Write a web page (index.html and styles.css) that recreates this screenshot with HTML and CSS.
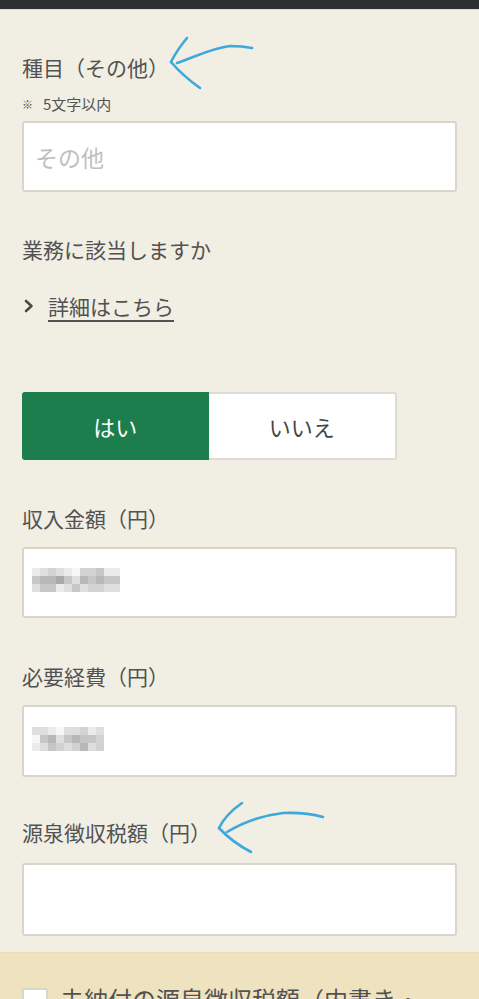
FILE: index.html
```html
<!DOCTYPE html>
<html lang="ja">
<head>
<meta charset="utf-8">
<title>収入入力</title>
<link rel="stylesheet" href="styles.css">
</head>
<body>
<div class="page">
  <div class="topbar"></div>
  <main class="form">
    <div class="label first">種目（その他）</div>
    <div class="note"><span class="kome">※</span>5文字以内</div>
    <div class="input in1"><span class="placeholder">その他</span></div>

    <div class="label q">業務に該当しますか</div>
    <a class="detail" href="#">
      <svg class="chev" width="10" height="14" viewBox="0 0 10 14"><path d="M2 2 L7.5 7 L2 12" fill="none" stroke="#4a4a4a" stroke-width="2.6" stroke-linecap="round" stroke-linejoin="round"/></svg>
      <span class="detail-text">詳細はこちら</span>
    </a>

    <div class="toggle">
      <button class="opt on">はい</button>
      <button class="opt">いいえ</button>
    </div>

    <div class="label l3">収入金額（円）</div>
    <div class="input in2">
      <div class="mosaic cols11">
        <i class="c1"></i><i class="c2"></i><i class="c3"></i><i class="c2"></i><i class="c1"></i><i class="c0"></i><i class="c3"></i><i class="c3"></i><i class="c4"></i><i class="c1"></i><i class="c1"></i>
        <i class="c4"></i><i class="c5"></i><i class="c5"></i><i class="c6"></i><i class="c4"></i><i class="c2"></i><i class="c5"></i><i class="c4"></i><i class="c5"></i><i class="c4"></i><i class="c4"></i>
        <i class="c2"></i><i class="c4"></i><i class="c4"></i><i class="c1"></i><i class="c2"></i><i class="c4"></i><i class="c2"></i><i class="c3"></i><i class="c3"></i><i class="c2"></i><i class="c2"></i>
      </div>
    </div>

    <div class="label l4">必要経費（円）</div>
    <div class="input in3">
      <div class="mosaic cols9">
        <i class="c2"></i><i class="c2"></i><i class="c1"></i><i class="c0"></i><i class="c2"></i><i class="c2"></i><i class="c3"></i><i class="c1"></i><i class="c2"></i>
        <i class="c0"></i><i class="c4"></i><i class="c5"></i><i class="c2"></i><i class="c4"></i><i class="c5"></i><i class="c4"></i><i class="c4"></i><i class="c3"></i>
        <i class="c1"></i><i class="c2"></i><i class="c4"></i><i class="c3"></i><i class="c2"></i><i class="c3"></i><i class="c5"></i><i class="c2"></i><i class="c3"></i>
      </div>
    </div>

    <div class="label l5">源泉徴収税額（円）</div>
    <div class="input in4"></div>
  </main>

  <section class="unpaid">
    <label class="check-row">
      <span class="checkbox"></span>
      <span class="check-text">未納付の源泉徴収税額（内書き・</span>
    </label>
  </section>

  <svg class="annot" width="479" height="999" viewBox="0 0 479 999">
    <g fill="none" stroke="#3ea8da" stroke-width="2.6" stroke-linecap="round" stroke-linejoin="round">
      <path d="M187 38 Q177 50 171 62"/>
      <path d="M171 62 Q183 76 200 88"/>
      <path d="M177 63 C195 57 212 48 230 46 Q242 46 252 48"/>
      <path d="M242 803 Q226 814 219 828"/>
      <path d="M219 828 Q232 842 251 852"/>
      <path d="M227 832 C240 824 258 816 283 813 Q305 812 323 817"/>
    </g>
  </svg>
</div>
</body>
</html>
```
FILE: styles.css
```css
* { box-sizing: border-box; }
html, body { margin: 0; padding: 0; }
body {
  background: #f1eee4;
  font-family: "Noto Sans CJK JP", "Noto Sans", sans-serif;
  font-weight: 400;
  color: #525252;
}
.page { position: relative; width: 479px; min-height: 999px; overflow: hidden; }
.topbar {
  height: 10px;
  background: #2e2f33;
  border-bottom: 1px solid #dcd9cf;
}
.form { padding: 0 22px 16px 22px; }
.label {
  font-size: 21px;
  line-height: 30px;
}
.label.first { margin-top: 42px; }
.note {
  margin-top: 12px;
  font-size: 15px;
  line-height: 20px;
  display: flex;
  align-items: center;
}
.kome { font-size: 11px; width: 21px; }
.input {
  background: #fff;
  border: 2px solid #d8d5cb;
  border-radius: 3px;
  display: flex;
  align-items: center;
  padding-left: 11px;
}
.in1 { margin-top: 7px; height: 71px; }
.placeholder { font-size: 23px; color: #c0c0c0; }
.label.q { margin-top: 42px; }
.detail {
  margin-top: 27px;
  display: flex;
  align-items: center;
  height: 30px;
  color: #525252;
  text-decoration: none;
}
.chev { margin-left: 2px; margin-right: 14px; }
.detail-text {
  font-size: 21px;
  text-decoration: underline;
  text-decoration-thickness: 2px;
  text-underline-offset: 5px;
}
.toggle {
  margin-top: 71px;
  display: flex;
  width: 375px;
  height: 68px;
}
.opt {
  flex: 1;
  font-family: inherit;
  font-weight: 400;
  font-size: 22px;
  color: #454545;
  background: #fff;
  border: 2px solid #dedbd2;
  border-left: none;
  border-radius: 0 3px 3px 0;
  padding: 0;
}
.opt.on {
  background: #1b7e4c;
  color: #fff;
  border: none;
  border-radius: 3px 0 0 3px;
}
.label.l3 { margin-top: 43px; }
.in2 { margin-top: 14px; height: 71px; padding-left: 8px; padding-bottom: 6px; }
.label.l4 { margin-top: 43px; }
.in3 { margin-top: 14px; height: 72px; padding-left: 8px; padding-bottom: 5px; }
.label.l5 { margin-top: 40px; }
.in4 { margin-top: 16px; height: 73px; }
.mosaic { display: grid; grid-auto-rows: 8px; filter: blur(0.6px); }
.mosaic.cols11 { grid-template-columns: repeat(11, 8px); }
.mosaic.cols9 { grid-template-columns: repeat(9, 8px); }
.c0 { background: #f6f6f6; }
.c1 { background: #ebebeb; }
.c2 { background: #dedede; }
.c3 { background: #d2d2d2; }
.c4 { background: #c6c6c6; }
.c5 { background: #b8b8b8; }
.c6 { background: #a9a9a9; }
.unpaid {
  background: #efe2bf;
  border-top: 1px solid #e8dcbc;
  min-height: 120px;
  padding: 34px 22px 20px 22px;
}
.check-row { display: flex; align-items: flex-start; gap: 12px; }
.checkbox {
  width: 26px;
  height: 26px;
  background: #fff;
  border: 2px solid #d8d5cb;
  border-radius: 3px;
  flex: none;
  margin-top: 1px;
}
.check-text { font-size: 24px; line-height: 30px; color: #525252; margin-top: -3px; }
.annot { position: absolute; left: 0; top: 0; pointer-events: none; }
```
